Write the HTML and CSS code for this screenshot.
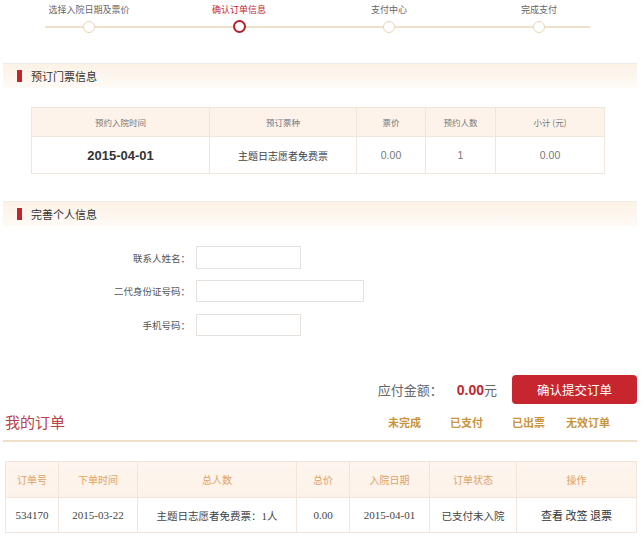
FILE: index.html
```html
<!DOCTYPE html>
<html lang="zh-CN">
<head>
<meta charset="utf-8">
<title>确认订单信息</title>
<link rel="stylesheet" href="styles.css">
</head>
<body>
<div class="steps">
  <div class="step"><div class="step-label">选择入院日期及票价</div><div class="dot"></div></div>
  <div class="step active"><div class="step-label">确认订单信息</div><div class="dot"></div></div>
  <div class="step"><div class="step-label">支付中心</div><div class="dot"></div></div>
  <div class="step"><div class="step-label">完成支付</div><div class="dot"></div></div>
</div>

<div class="sec-head sec-first"><span class="mark"></span>预订门票信息</div>

<table class="ticket">
  <colgroup><col class="c1"><col class="c2"><col class="c3"><col class="c4"><col class="c5"></colgroup>
  <thead>
    <tr><th>预约入院时间</th><th>预订票种</th><th>票价</th><th>预约人数</th><th>小计 (元)</th></tr>
  </thead>
  <tbody>
    <tr><td class="date">2015-04-01</td><td class="kind">主题日志愿者免费票</td><td class="num">0.00</td><td class="num">1</td><td class="num">0.00</td></tr>
  </tbody>
</table>

<div class="sec-head sec-second"><span class="mark"></span>完善个人信息</div>

<div class="form">
  <div class="row"><label class="lbl">联系人姓名：</label><input class="inp short" type="text"></div>
  <div class="row"><label class="lbl">二代身份证号码：</label><input class="inp long" type="text"></div>
  <div class="row"><label class="lbl">手机号码：</label><input class="inp short" type="text"></div>
</div>

<div class="pay">
  <span class="pay-lbl">应付金额：</span><span class="amount">0.00</span><span class="yuan">元</span>
  <button class="submit">确认提交订单</button>
</div>

<div class="orders-head">
  <div class="orders-title">我的订单</div>
  <div class="tabs">
    <span class="tab t1">未完成</span>
    <span class="tab t2">已支付</span>
    <span class="tab t3">已出票</span>
    <span class="tab t4">无效订单</span>
  </div>
</div>

<table class="orders">
  <colgroup><col class="o1"><col class="o2"><col class="o3"><col class="o4"><col class="o5"><col class="o6"><col class="o7"></colgroup>
  <thead>
    <tr><th>订单号</th><th>下单时间</th><th>总人数</th><th>总价</th><th>入院日期</th><th>订单状态</th><th>操作</th></tr>
  </thead>
  <tbody>
    <tr><td class="mono">534170</td><td class="mono">2015-03-22</td><td>主题日志愿者免费票：<span class="mono">1</span>人</td><td class="mono">0.00</td><td class="mono">2015-04-01</td><td>已支付未入院</td><td class="ops">查看 改签 退票</td></tr>
  </tbody>
</table>
</body>
</html>
```

FILE: styles.css
```css
* { box-sizing: border-box; }
html, body { margin: 0; padding: 0; background: #fff; }
body {
  width: 644px;
  height: 543px;
  overflow: hidden;
  font-family: "Noto Sans CJK SC", "Liberation Sans", sans-serif;
  color: #333;
}

/* progress */
.steps {
  display: flex;
  height: 45px;
  padding: 4px 0 0 14px;
  background: linear-gradient(#ede1c9, #ede1c9) no-repeat;
  background-size: 545px 2px;
  background-position: 45px 26px;
}
.step {
  width: 150px;
  display: flex;
  flex-direction: column;
  align-items: center;
}
.step-label {
  font-size: 9px;
  line-height: 12px;
  height: 12px;
  color: #666;
  white-space: nowrap;
}
.step.active .step-label { color: #c0272d; }
.dot {
  margin-top: 5px;
  width: 12px;
  height: 12px;
  border-radius: 50%;
  border: 1.5px solid #e8d6b2;
  background: #fff;
}
.step.active .dot {
  width: 13px;
  height: 13px;
  margin-top: 4px;
  border: 2.5px solid #b3202a;
}

/* section header */
.sec-head {
  margin: 0 7px 0 3px;
  height: 25px;
  display: flex;
  align-items: center;
  padding-left: 14px;
  font-size: 11px;
  color: #333;
  border-top: 1px solid #eeeae6;
  background: linear-gradient(to bottom, #fcf2e6, #fefaf6);
}
.sec-first { margin-top: 18px; }
.sec-second { margin-top: 27px; }
.mark {
  display: inline-block;
  width: 5px;
  height: 12px;
  background: #c0272d;
  margin-right: 9px;
}

/* ticket table */
.ticket {
  margin: 19px 0 0 31px;
  width: 573px;
  border-collapse: collapse;
  table-layout: fixed;
}
.ticket .c1 { width: 178px; }
.ticket .c2 { width: 147px; }
.ticket .c3 { width: 69px; }
.ticket .c4 { width: 70px; }
.ticket .c5 { width: 109px; }
.ticket th, .ticket td {
  border: 1px solid #efe6dc;
  text-align: center;
  padding: 0;
}
.ticket th {
  height: 29px;
  background: #fdf3ea;
  font-size: 8.5px;
  font-weight: normal;
  color: #777;
}
.ticket td { height: 37px; }
.ticket .date {
  font-family: "Liberation Sans", sans-serif;
  font-weight: bold;
  font-size: 13px;
  color: #333;
}
.ticket .kind { font-size: 10px; color: #444; }
.ticket .num {
  font-family: "Liberation Sans", sans-serif;
  font-size: 10.5px;
  color: #777;
}

/* form */
.form { padding-top: 20px; }
.row {
  display: flex;
  align-items: center;
  height: 23px;
  margin-bottom: 11px;
}
.row + .row { height: 22px; margin-bottom: 12px; }
.lbl {
  width: 190px;
  text-align: right;
  font-size: 9.5px;
  color: #555;
  margin-right: 6px;
}
.inp {
  height: 100%;
  border: 1px solid #e6e1dc;
  background: #fff;
  padding: 0;
  margin: 0;
  outline: none;
}
.inp.short { width: 105px; }
.inp.long { width: 168px; }

/* pay */
.pay {
  margin-top: 39px;
  display: flex;
  justify-content: flex-end;
  align-items: center;
  padding-right: 7px;
  height: 29px;
}
.pay-lbl { font-size: 13px; color: #666; margin-right: 14px; }
.amount {
  font-family: "Liberation Sans", sans-serif;
  font-weight: bold;
  font-size: 14px;
  color: #c0272d;
}
.yuan { font-size: 13px; color: #666; margin-right: 15px; }
.submit {
  width: 125px;
  height: 29px;
  border: none;
  border-radius: 4px;
  background: #c8262f;
  color: #fff;
  font-family: "Noto Sans CJK SC", sans-serif;
  font-size: 12.5px;
  padding: 0;
}

/* orders header */
.orders-head {
  margin: 0 7px 0 3px;
  height: 38px;
  display: flex;
  align-items: center;
  justify-content: space-between;
  border-bottom: 2px solid #f0dfc9;
}
.orders-title {
  font-size: 15px;
  color: #b8414a;
  padding-left: 2px;
  margin-top: -2px;
}
.tabs {
  display: flex;
  font-size: 11px;
  font-weight: bold;
  color: #c8943c;
  padding-right: 27px;
}
.tab { margin-left: 29px; }
.tab.t4 { margin-left: 21px; }

/* orders table */
.orders {
  margin: 19px 0 0 5px;
  width: 631px;
  border-collapse: collapse;
  table-layout: fixed;
}
.orders .o1 { width: 53px; }
.orders .o2 { width: 79px; }
.orders .o3 { width: 159px; }
.orders .o4 { width: 53px; }
.orders .o5 { width: 80px; }
.orders .o6 { width: 87px; }
.orders .o7 { width: 120px; }
.orders th, .orders td {
  border: 1px solid #f0e6db;
  text-align: center;
  padding: 0;
}
.orders th {
  height: 36px;
  background: linear-gradient(to bottom, #fdf5ee, #fdf2e9);
  font-size: 10px;
  font-weight: normal;
  color: #e0a263;
}
.orders td {
  height: 35px;
  font-size: 10.5px;
  color: #444;
}
.orders .mono {
  font-family: "Liberation Serif", serif;
  font-size: 11px;
}
.orders .ops { font-size: 11px; color: #333; }
```
